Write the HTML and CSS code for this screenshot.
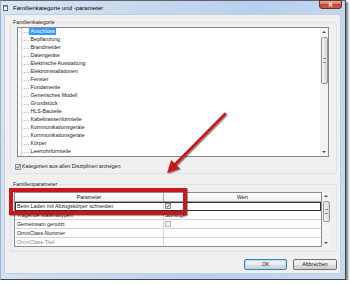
FILE: index.html
```html
<!DOCTYPE html>
<html lang="de">
<head>
  <meta charset="UTF-8">
  <meta name="viewport" content="width=device-width, initial-scale=1.0">
  <title>Familienkategorie und -parameter</title>
  <link rel="stylesheet" href="styles.css">
</head>
<body>
  <div class="window">
    <div class="titlebar">
      <svg class="app-icon" width="5" height="6" viewBox="0 0 5 6">
        <rect x="0.5" y="0.5" width="4" height="5" fill="#f6f6f6" stroke="#6b6b6b" stroke-width="1"/>
        <rect x="1" y="1" width="3" height="1" fill="#7da2ce"/>
      </svg>
      <span class="title">Familienkategorie und -parameter</span>
      <button class="close" aria-label="Schließen">
        <svg width="7" height="5" viewBox="0 0 7 5"><path d="M1.8 0.6 L5.2 4.4 M5.2 0.6 L1.8 4.4" stroke="#fff" stroke-width="1.3"/></svg>
      </button>
    </div>

    <div class="client">
      <fieldset class="group group-category">
        <legend>Familienkategorie</legend>
        <div class="tree-box">
          <ul class="tree">
            <li><span class="selected">Anschluss</span></li>
            <li><span>Bepflanzung</span></li>
            <li><span>Brandmelder</span></li>
            <li><span>Datengeräte</span></li>
            <li><span>Elektrische Ausstattung</span></li>
            <li><span>Elektroinstallationen</span></li>
            <li><span>Fenster</span></li>
            <li><span>Fundamente</span></li>
            <li><span>Generisches Modell</span></li>
            <li><span>Grundstück</span></li>
            <li><span>HLS-Bauteile</span></li>
            <li><span>Kabeltrassenformteile</span></li>
            <li><span>Kommunikationsgeräte</span></li>
            <li><span>Kommunikationsgeräte</span></li>
            <li><span>Körper</span></li>
            <li><span>Leerrohrformteile</span></li>
            <li><span>Leuchten</span></li>
          </ul>
          <div class="scrollbar">
            <div class="scroll-btn up"></div>
            <div class="scroll-track"><div class="thumb thumb-tree"></div></div>
            <div class="scroll-btn down"></div>
          </div>
        </div>
        <label class="check-row">
          <span class="check">
            <svg width="4" height="4" viewBox="0 0 4 4"><path d="M0.5 2 L1.6 3.3 L3.6 0.5" stroke="#2a4fa5" stroke-width="0.9" fill="none"/></svg>
          </span>
          Kategorien aus allen Disziplinen anzeigen
        </label>
      </fieldset>

      <fieldset class="group group-params">
        <legend>Familienparameter</legend>
        <div class="param-table">
          <div class="grid">
            <div class="row head"><div class="cell">Parameter</div><div class="cell">Wert</div></div>
            <div class="row selected">
              <div class="cell">Beim Laden mit Abzugskörper schneiden</div>
              <div class="cell value">
                <span class="check">
                  <svg width="4" height="4" viewBox="0 0 4 4"><path d="M0.5 2 L1.6 3.3 L3.6 0.5" stroke="#2a4fa5" stroke-width="0.9" fill="none"/></svg>
                </span>
              </div>
            </div>
            <div class="row"><div class="cell">Tragende Materialtypen</div><div class="cell value">Sonstige</div></div>
            <div class="row"><div class="cell">Gemeinsam genutzt</div><div class="cell value"><span class="check disabled"></span></div></div>
            <div class="row"><div class="cell">OmniClass-Nummer</div><div class="cell value"></div></div>
            <div class="row"><div class="cell muted">OmniClass-Titel</div><div class="cell value"></div></div>
          </div>
          <div class="scrollbar">
            <div class="scroll-btn up"></div>
            <div class="scroll-track"><div class="thumb thumb-table"></div></div>
            <div class="scroll-btn down"></div>
          </div>
        </div>
      </fieldset>

      <div class="buttons">
        <button class="btn btn-ok">OK</button>
        <button class="btn btn-cancel">Abbrechen</button>
      </div>
    </div>

    <!-- annotation drawn over the dialog -->
    <div class="highlight"></div>
    <svg class="arrow" width="72" height="72" viewBox="0 0 72 72">
      <defs>
        <filter id="arrow-shadow" x="-20%" y="-20%" width="140%" height="140%">
          <feDropShadow dx="1.2" dy="1.2" stdDeviation="0.7" flood-color="#000" flood-opacity="0.45"/>
        </filter>
      </defs>
      <g filter="url(#arrow-shadow)" fill="#cc1414">
        <line x1="65" y1="6" x2="15" y2="56.5" stroke="#cc1414" stroke-width="2.6" stroke-linecap="round"/>
        <polygon points="7,65 19.8,60.6 11.2,52"/>
      </g>
    </svg>
  </div>
</body>
</html>
```

FILE: styles.css
```css
* {
  box-sizing: border-box;
}

body {
  margin: 0;
  background: #fff;
  font-family: "Liberation Sans", Arial, sans-serif;
  font-size: 5.3px;
  color: #1a1a1a;
}

.window {
  position: relative;
  display: flex;
  flex-direction: column;
  width: 346px;
  height: 280px;
  border: 1px solid;
  border-color: #5b6570 #3f4751 #3f4751 #9db2cc;
  background: linear-gradient(100deg, #d9e5f3 0%, #c8d9ee 35%, #b7cfee 65%, #c9daef 100%);
  box-shadow: 2px 2px 2px rgba(30, 30, 30, 0.6);
}

/* title bar */
.titlebar {
  display: flex;
  align-items: center;
  height: 13px;
  flex: none;
}

.app-icon {
  margin-left: 2px;
  flex: none;
}

.title {
  margin-left: 5px;
  font-size: 6px;
  color: #000;
}

.close {
  display: flex;
  align-items: center;
  justify-content: center;
  align-self: flex-start;
  width: 23px;
  height: 9px;
  margin: -1px 3px 0 auto;
  padding: 0;
  border: 1px solid #7a2c22;
  border-radius: 0 0 3px 3px;
  background: linear-gradient(#e8a99c, #d37362 45%, #c4412d 52%, #cb5a46);
}

/* client area */
.client {
  display: flex;
  flex-direction: column;
  height: 260px;
  margin: 0 4px 0 3px;
  padding: 0 3px 0 5px;
  background: #f0f0f0;
  border: 1px solid #c2cfdd;
}

.group {
  min-width: 0;
  margin: 0;
  border: 1px solid #dde4e9;
  border-radius: 2px;
}

.group legend {
  height: 7px;
  padding: 0 1px;
  line-height: 7px;
}

.group-category {
  margin-top: 4px;
  padding: 1px 7px 3px 6px;
}

.group-category legend {
  margin-left: -5px;
}

.group-params {
  margin-top: 7px;
  padding: 4px 6px 4px 3px;
}

.group-params legend {
  margin-left: -2px;
}

/* category tree */
.tree-box {
  display: flex;
  height: 130px;
  background: #fff;
  border: 1px solid #828790;
}

.tree {
  flex: 1;
  min-width: 0;
  margin: 0 0 0 3px;
  padding: 0;
  list-style: none;
  overflow: hidden;
  border-left: 1px dotted #bdbdbd;
}

.tree li {
  display: flex;
  align-items: flex-start;
  height: 8px;
  white-space: nowrap;
}

.tree li::before {
  content: "";
  flex: none;
  width: 7px;
  margin-top: 4px;
  border-top: 1px dotted #bdbdbd;
}

.tree span {
  height: 7px;
  padding: 0 1.5px;
  line-height: 7px;
}

.tree .selected {
  background: #3399ff;
  color: #fff;
}

/* scrollbars */
.scrollbar {
  display: flex;
  flex-direction: column;
  flex: none;
  width: 8px;
  background: #f3f3f3;
}

.scroll-btn {
  display: flex;
  align-items: center;
  justify-content: center;
  height: 8px;
}

.scroll-btn::after {
  content: "";
  border-left: 2px solid transparent;
  border-right: 2px solid transparent;
}

.scroll-btn.up::after {
  border-bottom: 2px solid #505050;
}

.scroll-btn.down::after {
  border-top: 2px solid #505050;
}

.scroll-track {
  flex: 1;
}

.thumb {
  display: flex;
  align-items: center;
  justify-content: center;
  width: 7px;
  margin: 1px 0 0 0.5px;
  border: 1px solid #969696;
  border-radius: 2px;
  background: linear-gradient(to right, #f4f4f4, #d9d9d9);
}

.thumb::after {
  content: "";
  width: 3px;
  height: 3px;
  border-top: 1px solid #8a8a8a;
  border-bottom: 1px solid #8a8a8a;
}

.thumb-tree {
  height: 47px;
}

.thumb-table {
  height: 21px;
}

/* checkboxes */
.check-row {
  display: flex;
  align-items: center;
  gap: 1px;
  height: 7px;
  margin: 6px 0 0 -2px;
  line-height: 7px;
}

.check {
  display: flex;
  align-items: center;
  justify-content: center;
  flex: none;
  width: 6px;
  height: 6px;
  border: 1px solid #8e8f8f;
  background: linear-gradient(135deg, #dedede, #fafafa);
}

.check.disabled {
  border-color: #b8b8b8;
  background: #f2f2f2;
}

/* parameter table */
.param-table {
  display: flex;
  height: 55px;
}

.grid {
  width: 308px;
  flex: none;
  background: #fff;
  border: 1px solid #8d8d8d;
}

.row {
  display: grid;
  grid-template-columns: 149px 1fr;
  height: 9px;
  border-bottom: 1px solid #d5d5d5;
}

.row:last-child {
  height: 8px;
  border-bottom: 0;
}

.cell {
  padding-left: 2px;
  line-height: 8px;
  white-space: nowrap;
  overflow: hidden;
}

.cell:first-child {
  border-right: 1px solid #d5d5d5;
}

.cell.value {
  padding-left: 1px;
}

.cell.value .check {
  margin-top: 1px;
}

.row.head {
  background: linear-gradient(#fff, #eef0f3);
  border-bottom-color: #a0a3a6;
}

.row.head .cell {
  padding: 0;
  text-align: center;
  border-right-color: #a0a3a6;
}

.row.selected {
  outline: 1px solid #333;
  outline-offset: -1px;
}

.muted {
  color: #8a8a8a;
}

/* buttons */
.buttons {
  display: flex;
  justify-content: flex-end;
  gap: 6px;
  margin-top: 7px;
}

.btn {
  height: 11px;
  padding: 0;
  font: inherit;
  line-height: 9px;
  color: #1a1a1a;
  border: 1px solid #707070;
  border-radius: 2px;
  background: linear-gradient(#f2f2f2 0, #ebebeb 50%, #dddddd 50%, #cfcfcf 100%);
}

.btn-ok {
  width: 43px;
  border-color: #3c7fb1;
  box-shadow: inset 0 0 0 1px rgba(170, 220, 248, 0.9);
}

.btn-cancel {
  width: 44px;
}

/* annotation overlay */
.highlight {
  position: absolute;
  left: 8px;
  top: 187px;
  width: 178px;
  height: 27px;
  border: 4px solid #c8161d;
  box-shadow: 1px 1px 1px rgba(0, 0, 0, 0.35);
}

.arrow {
  position: absolute;
  left: 159px;
  top: 107px;
  overflow: visible;
}
```
